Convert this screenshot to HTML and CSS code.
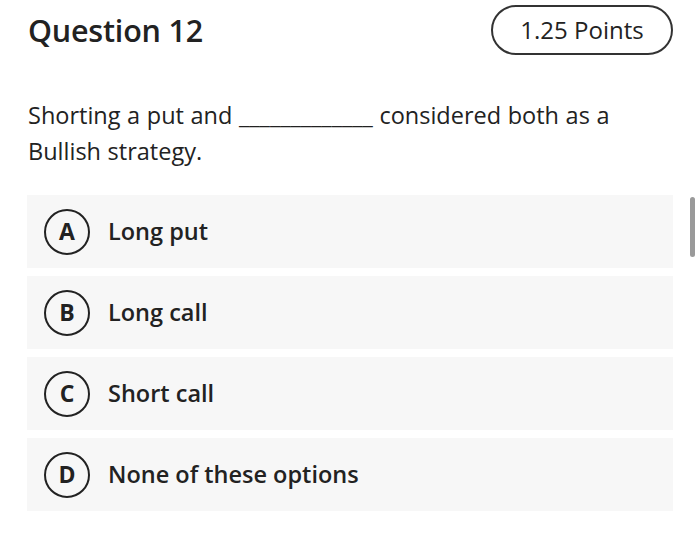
FILE: index.html
```html
<!DOCTYPE html>
<html lang="en">
<head>
<meta charset="utf-8">
<title>Question 12</title>
<link rel="stylesheet" href="styles.css">
</head>
<body>
<main class="page">
  <header class="header">
    <h1 class="title">Question 12</h1>
    <div class="points">1.25 Points</div>
  </header>
  <p class="question">Shorting a put and _____________ considered both as a Bullish strategy.</p>
  <ul class="options">
    <li class="option"><span class="letter">A</span><span class="label">Long put</span></li>
    <li class="option"><span class="letter">B</span><span class="label">Long call</span></li>
    <li class="option"><span class="letter">C</span><span class="label">Short call</span></li>
    <li class="option"><span class="letter">D</span><span class="label">None of these options</span></li>
  </ul>
  <div class="scrollbar"></div>
</main>
</body>
</html>
```
FILE: styles.css
```css
* { box-sizing: border-box; }
html, body { margin: 0; padding: 0; background: #fff; }
body {
  font-family: "Open Sans", "Noto Sans", sans-serif;
  color: #222;
  width: 700px;
  height: 537px;
  overflow: hidden;
}
.page {
  position: relative;
  padding: 5px 27px 0 27px;
}
.header {
  display: flex;
  justify-content: space-between;
  align-items: center;
  height: 50px;
}
.title {
  margin: 0 0 0 1px;
  font-size: 30.5px;
  font-weight: 600;
  letter-spacing: -0.2px;
}
.points {
  width: 182px;
  height: 50px;
  border: 2px solid #333;
  border-radius: 25px;
  display: flex;
  align-items: center;
  justify-content: center;
  font-size: 24px;
  font-weight: 500;
  padding-bottom: 1px;
}
.question {
  margin: 42px 0 0 1px;
  font-size: 23.5px;
  line-height: 36px;
  word-spacing: 0.5px;
}
.options {
  list-style: none;
  margin: 26px 0 0 0;
  padding: 0;
  display: flex;
  flex-direction: column;
  gap: 8px;
}
.option {
  background: #f7f7f7;
  height: 73px;
  display: flex;
  align-items: center;
  padding-left: 17px;
  gap: 18px;
}
.letter {
  width: 46px;
  height: 46px;
  border: 2.5px solid #222;
  border-radius: 50%;
  display: flex;
  align-items: center;
  justify-content: center;
  font-size: 23px;
  font-weight: 700;
  flex: none;
  padding-bottom: 1px;
}
.label {
  font-size: 23.5px;
  font-weight: 600;
  padding-bottom: 2px;
}
.scrollbar {
  position: absolute;
  left: 690px;
  top: 197px;
  width: 5px;
  height: 60px;
  border-radius: 3px;
  background: #9a9a9a;
}
```
